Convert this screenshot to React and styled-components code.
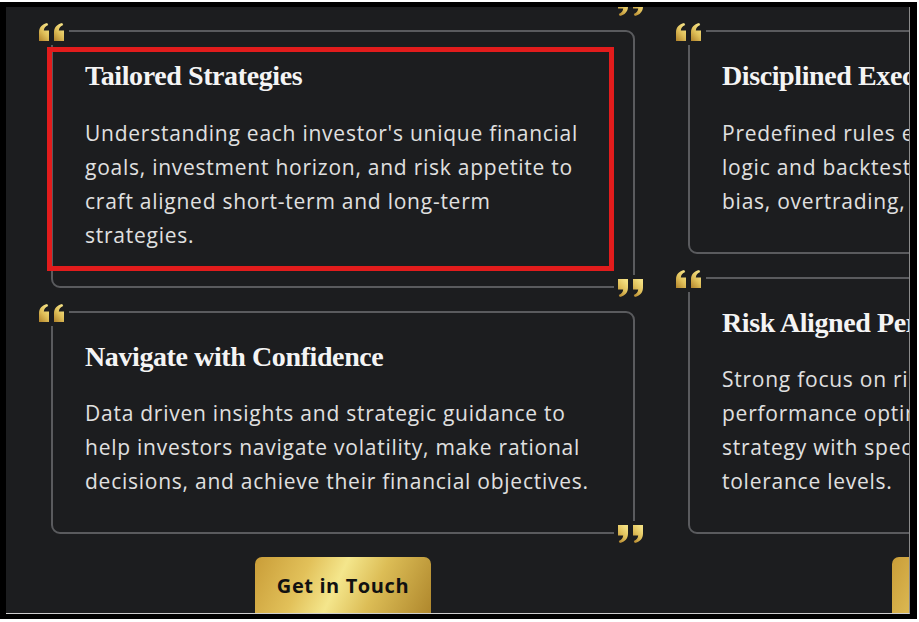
import styled, { createGlobalStyle } from "styled-components";

const Global = createGlobalStyle`
  html, body {
    margin: 0;
    background: #ffffff;
  }
  * { box-sizing: border-box; }
`;

const PAGE_BG = "#1c1d1f";

const Frame = styled.div`
  margin-top: 2px;
  width: 917px;
  height: 617px;
  background: #000;
  padding: 5px 7px 5px 6px;
`;

const Viewport = styled.div`
  width: 100%;
  height: 100%;
  background: ${PAGE_BG};
  border-right: 1px solid #8a8a8a;
  border-bottom: 1px solid #cfcfcf;
  overflow: hidden;
`;

const Track = styled.div`
  display: flex;
  gap: 53px;
  padding-left: 45px;
  margin-top: -200px;
`;

const Column = styled.div`
  width: 584px;
  flex-shrink: 0;
  display: flex;
  flex-direction: column;
  gap: 23px;
`;

const Card = styled.div`
  position: relative;
  border: 2px solid #5a5b5e;
  border-radius: 9px;
  padding: 27px 32px 34px;
  ${p => p.$ghost && `height: 200px;`}
`;

const Title = styled.h3`
  margin: 0 0 23px;
  font-family: "Liberation Serif", "Times New Roman", serif;
  font-weight: 700;
  font-size: 28px;
  line-height: 1.2;
  letter-spacing: -0.4px;
  color: #f4f4f4;
  white-space: nowrap;
`;

const Text = styled.p`
  margin: 0;
  font-family: "Open Sans", "Noto Sans", sans-serif;
  font-size: 21px;
  line-height: 34px;
  letter-spacing: 0.75px;
  color: #e0e0e0;
  white-space: nowrap;
`;

const QuoteBox = styled.span`
  position: absolute;
  display: flex;
  padding: 3px 3px 4px;
  background: ${PAGE_BG};
  ${p => p.$close
    ? `right: -15px; bottom: -14px; padding: 4px 3px 3px;`
    : `left: -18px; top: -12px;`}
`;

const Highlight = styled.div`
  position: absolute;
  left: -6px;
  top: 15px;
  right: 19px;
  bottom: 15px;
  border: 5px solid #e21c1c;
  pointer-events: none;
`;

const Button = styled.button`
  align-self: center;
  width: 176px;
  height: 62px;
  margin-top: 0;
  border: none;
  border-radius: 7px;
  background: linear-gradient(115deg, #c99d38 0%, #e2c15a 28%, #f4e68c 46%, #dcbd56 66%, #ad852b 100%);
  font-family: "Open Sans", "Noto Sans", sans-serif;
  font-weight: 700;
  font-size: 20px;
  letter-spacing: 0.6px;
  color: #111;
  padding: 0 0 6px;
`;

function Quote({ close }) {
  const id = close ? "gq-close" : "gq-open";
  const mark = close
    ? "M1 0H11V8.5C11 13.5 8 16.8 2.8 18L1.8 16C4.6 15 6 13 6.2 10.5H1Z"
    : "M11 18H1V9.5C1 4.5 4 1.2 9.2 0L10.2 2C7.4 3 6 5 5.8 7.5H11Z";
  return (
    <QuoteBox $close={close}>
      <svg width="28" height="18" viewBox="0 0 28 18">
        <defs>
          <linearGradient id={id} x1="0" y1="1" x2="0.6" y2="0">
            <stop offset="0" stopColor="#b0822a" />
            <stop offset="0.55" stopColor="#e0c05a" />
            <stop offset="1" stopColor="#f3df82" />
          </linearGradient>
        </defs>
        <path d={mark} fill={`url(#${id})`} />
        <path d={mark} fill={`url(#${id})`} transform="translate(15 0)" />
      </svg>
    </QuoteBox>
  );
}

function FeatureCard({ title, lines, ghost, highlighted }) {
  return (
    <Card $ghost={ghost}>
      <Quote />
      <Title>{title}</Title>
      <Text>
        {lines.map((line, i) => (
          <span key={i}>
            {i > 0 && <br />}
            {line}
          </span>
        ))}
      </Text>
      <Quote close />
      {highlighted && <Highlight />}
    </Card>
  );
}

const columns = [
  [
    { title: "Structured Approach", lines: [], ghost: true },
    {
      title: "Tailored Strategies",
      lines: [
        "Understanding each investor's unique financial",
        "goals, investment horizon, and risk appetite to",
        "craft aligned short-term and long-term",
        "strategies.",
      ],
      highlighted: true,
    },
    {
      title: "Navigate with Confidence",
      lines: [
        "Data driven insights and strategic guidance to",
        "help investors navigate volatility, make rational",
        "decisions, and achieve their financial objectives.",
      ],
    },
  ],
  [
    { title: "Research Backed", lines: [], ghost: true },
    {
      title: "Disciplined Execution",
      lines: [
        "Predefined rules enforced through structured",
        "logic and backtested models to remove emotional",
        "bias, overtrading, and impulsive decisions.",
      ],
    },
    {
      title: "Risk Aligned Performance",
      lines: [
        "Strong focus on risk management, drawdowns and",
        "performance optimization while matching every",
        "strategy with specific risk appetite and",
        "tolerance levels.",
      ],
    },
  ],
];

export default function App() {
  return (
    <>
      <Global />
      <Frame>
        <Viewport>
          <Track>
            {columns.map((cards, i) => (
              <Column key={i}>
                {cards.map(c => (
                  <FeatureCard key={c.title} {...c} />
                ))}
                <Button>Get in Touch</Button>
              </Column>
            ))}
          </Track>
        </Viewport>
      </Frame>
    </>
  );
}
